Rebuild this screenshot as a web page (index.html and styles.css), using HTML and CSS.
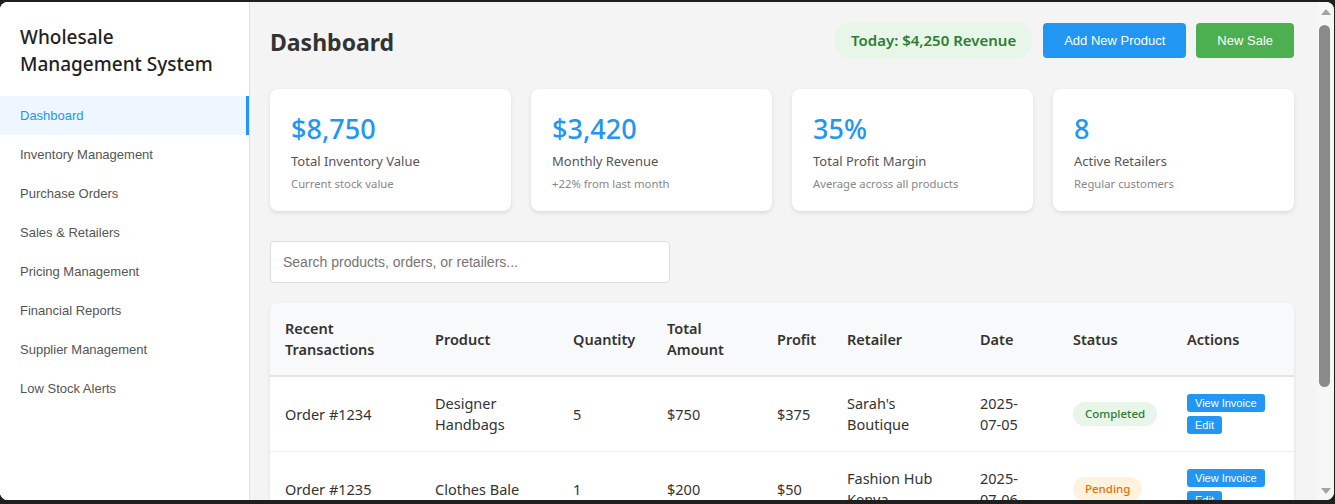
FILE: index.html
```html
<!DOCTYPE html>
<html lang="en">
<head>
<meta charset="utf-8">
<title>Wholesale Management System</title>
<link rel="stylesheet" href="styles.css">
</head>
<body>
<div class="window">
  <div class="scroller">
    <aside class="sidebar">
      <h1 class="brand">Wholesale Management System</h1>
      <nav class="nav">
        <a class="nav-item active">Dashboard</a>
        <a class="nav-item">Inventory Management</a>
        <a class="nav-item">Purchase Orders</a>
        <a class="nav-item">Sales &amp; Retailers</a>
        <a class="nav-item">Pricing Management</a>
        <a class="nav-item">Financial Reports</a>
        <a class="nav-item">Supplier Management</a>
        <a class="nav-item">Low Stock Alerts</a>
      </nav>
    </aside>
    <main class="main">
      <header class="topbar">
        <h2 class="page-title">Dashboard</h2>
        <div class="top-actions">
          <span class="revenue-pill">Today: $4,250 Revenue</span>
          <button class="btn btn-blue">Add New Product</button>
          <button class="btn btn-green">New Sale</button>
        </div>
      </header>

      <section class="stats">
        <div class="card">
          <div class="card-value">$8,750</div>
          <div class="card-label">Total Inventory Value</div>
          <div class="card-sub">Current stock value</div>
        </div>
        <div class="card">
          <div class="card-value">$3,420</div>
          <div class="card-label">Monthly Revenue</div>
          <div class="card-sub">+22% from last month</div>
        </div>
        <div class="card">
          <div class="card-value">35%</div>
          <div class="card-label">Total Profit Margin</div>
          <div class="card-sub">Average across all products</div>
        </div>
        <div class="card">
          <div class="card-value">8</div>
          <div class="card-label">Active Retailers</div>
          <div class="card-sub">Regular customers</div>
        </div>
      </section>

      <input class="search" type="text" placeholder="Search products, orders, or retailers...">

      <div class="table-card">
        <table class="tx-table">
          <colgroup>
            <col class="c1"><col class="c2"><col class="c3"><col class="c4"><col class="c5"><col class="c6"><col class="c7"><col class="c8"><col class="c9">
          </colgroup>
          <thead>
            <tr>
              <th>Recent Transactions</th>
              <th>Product</th>
              <th>Quantity</th>
              <th>Total Amount</th>
              <th>Profit</th>
              <th>Retailer</th>
              <th>Date</th>
              <th>Status</th>
              <th>Actions</th>
            </tr>
          </thead>
          <tbody>
            <tr>
              <td>Order #1234</td>
              <td>Designer Handbags</td>
              <td>5</td>
              <td>$750</td>
              <td>$375</td>
              <td>Sarah's Boutique</td>
              <td>2025-<span class="nowrap">07-05</span></td>
              <td><span class="status status-done">Completed</span></td>
              <td><button class="act">View Invoice</button><button class="act">Edit</button></td>
            </tr>
            <tr>
              <td>Order #1235</td>
              <td>Clothes Bale</td>
              <td>1</td>
              <td>$200</td>
              <td>$50</td>
              <td>Fashion Hub Kenya</td>
              <td>2025-<span class="nowrap">07-06</span></td>
              <td><span class="status status-pending">Pending</span></td>
              <td><button class="act">View Invoice</button><button class="act">Edit</button></td>
            </tr>
          </tbody>
        </table>
      </div>
    </main>
  </div>
  <div class="rail" aria-hidden="true">
    <div class="rail-btn"><span class="tri-up"></span></div>
    <div class="rail-track"><div class="rail-thumb"></div></div>
    <div class="rail-btn"><span class="tri-down"></span></div>
  </div>
</div>
</body>
</html>
```

FILE: styles.css
```css
* { box-sizing: border-box; }

html, body {
  margin: 0;
  padding: 0;
  height: 504px;
  overflow: hidden;
  background: #1f1f1f;
}

.window {
  margin-top: 2px;
  width: 1334px;
  height: 498px;
  border-radius: 8px;
  overflow: hidden;
  background: #f4f4f4;
  display: flex;
}

.scroller {
  flex: 1 1 auto;
  min-width: 0;
  height: 100%;
  overflow: hidden;
  display: flex;
  align-items: stretch;
  background: #f4f4f4;
}

/* Scrollbar rail */
.rail {
  flex: 0 0 17px;
  display: flex;
  flex-direction: column;
  background: #f7f7f7;
}

.rail-btn {
  height: 17px;
  display: flex;
  align-items: center;
  justify-content: center;
}

.tri-up {
  width: 0;
  height: 0;
  border-left: 5px solid transparent;
  border-right: 5px solid transparent;
  border-bottom: 6px solid #a3a3a3;
  margin-top: 2px;
}

.tri-down {
  width: 0;
  height: 0;
  border-left: 5px solid transparent;
  border-right: 5px solid transparent;
  border-top: 6px solid #a3a3a3;
  margin-bottom: 2px;
}

.rail-track {
  flex: 1 1 auto;
  padding: 6px 4px 0 2px;
}

.rail-thumb {
  height: 362px;
  border-radius: 6px;
  background: #8a8a8a;
}

/* Sidebar */
.sidebar {
  flex: 0 0 250px;
  width: 250px;
  background: #fff;
  border-right: 1px solid #e0e0e0;
  padding-top: 22px;
}

.brand {
  margin: 0 0 18px;
  padding: 0 20px;
  font-family: "Noto Sans", "Open Sans", sans-serif;
  font-size: 19px;
  font-weight: 500;
  line-height: 27px;
  color: #222;
}

.nav { display: flex; flex-direction: column; }

.nav-item {
  display: block;
  padding: 12px 20px;
  height: 39px;
  font-family: "Liberation Sans", Arial, sans-serif;
  font-size: 13px;
  line-height: 15px;
  color: #555;
  cursor: pointer;
}

.nav-item.active {
  background: #eef6ff;
  color: #2196f3;
  border-right: 3px solid #2196f3;
}

/* Main */
.main {
  flex: 1 1 auto;
  min-width: 0;
  padding: 20px 23px 20px 20px;
  font-family: "Noto Sans", "Open Sans", sans-serif;
  color: #333;
}

.topbar {
  display: flex;
  align-items: center;
  justify-content: space-between;
  height: 37px;
  margin-bottom: 30px;
}

.page-title {
  margin: 0;
  padding-top: 3px;
  font-size: 23px;
  font-weight: 700;
  color: #333;
  line-height: 32px;
}

.top-actions {
  display: flex;
  align-items: center;
  gap: 10px;
}

.revenue-pill {
  display: inline-block;
  height: 37px;
  line-height: 37px;
  padding: 0 17px;
  border-radius: 20px;
  background: #e8f5e9;
  color: #2e7d32;
  font-size: 15px;
  font-weight: 600;
}

.btn {
  height: 35px;
  padding: 0 21px;
  border: none;
  border-radius: 4px;
  color: #fff;
  font-family: "Liberation Sans", Arial, sans-serif;
  font-size: 13px;
  cursor: pointer;
}
.btn-blue { background: #2196f3; }
.btn-green { background: #4caf50; }

/* Stat cards */
.stats {
  display: grid;
  grid-template-columns: repeat(4, 1fr);
  gap: 20px;
  margin-bottom: 30px;
}

.card {
  background: #fff;
  border-radius: 8px;
  box-shadow: 0 2px 4px rgba(0, 0, 0, 0.1);
  padding: 22px 20px 19px 21px;
  height: 122px;
}

.card-value {
  font-size: 27px;
  font-weight: 500;
  line-height: 36px;
  color: #2196f3;
}

.card-label {
  margin-top: 5px;
  font-size: 13px;
  line-height: 19px;
  color: #555;
}

.card-sub {
  margin-top: 5px;
  font-size: 11.3px;
  line-height: 16px;
  color: #888;
}

/* Search */
.search {
  display: block;
  width: 400px;
  height: 42px;
  padding: 0 12px;
  border: 1px solid #ddd;
  border-radius: 4px;
  background: #fff;
  font-family: "Liberation Sans", Arial, sans-serif;
  font-size: 14px;
  color: #333;
  margin-bottom: 20px;
  outline: none;
}
.search::placeholder { color: #757575; }

/* Table */
.table-card {
  background: #fff;
  border-radius: 8px;
  box-shadow: 0 2px 4px rgba(0, 0, 0, 0.08);
  overflow: hidden;
}

.tx-table {
  width: 100%;
  border-collapse: collapse;
  table-layout: fixed;
}

.c1 { width: 150px; }
.c2 { width: 138px; }
.c3 { width: 94px; }
.c4 { width: 110px; }
.c5 { width: 70px; }
.c6 { width: 133px; }
.c7 { width: 93px; }
.c8 { width: 114px; }
.c9 { width: auto; }

.tx-table th,
.tx-table td {
  padding: 15px;
  text-align: left;
  font-size: 14.5px;
  line-height: 21px;
  vertical-align: middle;
}

.tx-table th {
  background: #f8f9fa;
  font-weight: 600;
  color: #333;
  border-bottom: 2px solid #e4e4e4;
}

.tx-table td {
  color: #333;
  border-bottom: 1px solid #eee;
}

.nowrap { white-space: nowrap; }

.status {
  display: inline-block;
  padding: 0 12px;
  height: 24px;
  line-height: 24px;
  border-radius: 12px;
  font-size: 11.5px;
  font-weight: 500;
}
.status-done { background: #e8f5e9; color: #2e7d32; }
.status-pending { background: #fff3e0; color: #ef6c00; }

.act {
  display: inline-block;
  height: 18px;
  padding: 0 8px;
  margin: 2px 5px 2px 0;
  border: none;
  border-radius: 3px;
  background: #2196f3;
  color: #fff;
  font-family: "Liberation Sans", Arial, sans-serif;
  font-size: 11px;
  line-height: 18px;
  cursor: pointer;
  vertical-align: top;
}
```
